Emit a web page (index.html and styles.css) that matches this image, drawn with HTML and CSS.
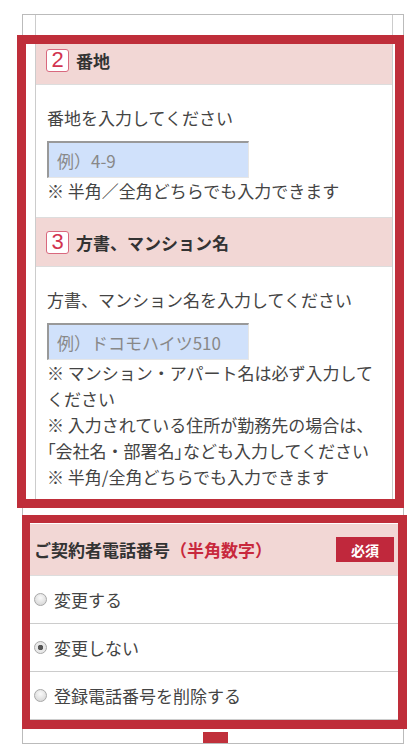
FILE: index.html
```html
<!DOCTYPE html>
<html lang="ja">

<head>
    <meta charset="UTF-8">
    <meta name="viewport" content="width=device-width, initial-scale=1.0">
    <title>ご契約者情報の変更</title>
    <link rel="stylesheet" href="styles.css">
</head>

<body>
    <div class="screen">
        <div class="address-column">
            <div class="step-head">
                <span class="step-num">2</span>
                <span class="step-title">番地</span>
            </div>
            <div class="step-body">
                <p class="step-label">番地を入力してください</p>
                <input type="text" class="step-input" placeholder="例）4-9">
                <p class="step-note">※ 半角／全角どちらでも入力できます</p>
            </div>

            <div class="step-head">
                <span class="step-num">3</span>
                <span class="step-title">方書、マンション名</span>
            </div>
            <div class="step-body">
                <p class="step-label">方書、マンション名を入力してください</p>
                <input type="text" class="step-input" placeholder="例）ドコモハイツ510">
                <p class="step-note">
                    ※ マンション・アパート名は必ず入力して<br>ください<br>
                    ※ 入力されている住所が勤務先の場合は、<br>
                    <span class="bracket">「</span>会社名・部署名<span class="bracket">」</span>なども入力してください<br>
                    ※ 半角/全角どちらでも入力できます
                </p>
            </div>
        </div>

        <div class="phone-section">
            <div class="phone-head">
                <span class="phone-title">ご契約者電話番号<span class="phone-hint">（半角数字）</span></span>
                <span class="required">必須</span>
            </div>
            <label class="phone-row"><input type="radio" name="tel"> 変更する</label>
            <label class="phone-row"><input type="radio" name="tel" checked> 変更しない</label>
            <label class="phone-row"><input type="radio" name="tel"> 登録電話番号を削除する</label>
        </div>

        <div class="next-button"></div>
    </div>

    <!-- 赤枠（注釈） -->
    <div class="frame frame-address"></div>
    <div class="frame frame-phone"></div>
</body>

</html>
```

FILE: styles.css
```css
html, body {
    margin: 0;
    padding: 0;
    background-color: white;
}

body {
    position: relative;
    font-family: "Noto Sans CJK JP", "Noto Sans", sans-serif;
    color: #444;
    font-size: 17px;
}

p {
    margin: 0;
}

.screen {
    margin: 14px 0 0 22px;
    width: 380px;
    height: 728px;
    border: 1px solid #bbb;
    overflow: hidden;
}

.address-column {
    margin: 0 10px 0 12px;
    padding-top: 20px;
    border-left: 1px solid #ccc;
    border-right: 1px solid #ccc;
}

.step-head {
    display: flex;
    align-items: center;
    gap: 7px;
    height: 48px;
    padding-left: 10px;
    background-color: #f2d7d5;
    border-top: 1px solid #ddd;
    border-bottom: 1px solid #ddd;
}

.step-num {
    display: flex;
    align-items: center;
    justify-content: center;
    width: 21px;
    height: 21px;
    border: 1px solid #d9687e;
    border-radius: 3px;
    background-color: white;
    color: #d2344f;
    font-family: "Liberation Sans", sans-serif;
    font-size: 22px;
    line-height: 1;
}

.step-title {
    font-weight: bold;
    font-size: 17px;
    color: #333;
}

.step-body {
    padding: 20px 12px 13px 11px;
    line-height: 26px;
}

.step-input {
    display: block;
    box-sizing: border-box;
    width: 202px;
    height: 37px;
    margin-top: 10px;
    padding: 0 0 0 8px;
    background-color: #d0e1fb;
    border-top: 2px solid #999;
    border-left: 2px solid #999;
    border-right: 1px solid #e6e6e6;
    border-bottom: 1px solid #e6e6e6;
    font-family: inherit;
    font-size: 17px;
    outline: none;
}

.step-input::placeholder {
    color: #888;
}

.step-note {
    white-space: nowrap;
}

.bracket {
    font-feature-settings: "palt";
}

/* 電話番号 */
.phone-section {
    margin-top: 21px;
}

.phone-head {
    display: flex;
    align-items: center;
    justify-content: space-between;
    height: 51px;
    padding: 0 9px 0 11px;
    background-color: #f2d7d5;
    border-bottom: 1px solid #ddd;
}

.phone-title {
    font-weight: bold;
    color: #333;
}

.phone-hint {
    color: #c8283c;
}

.required {
    display: flex;
    align-items: center;
    justify-content: center;
    width: 58px;
    height: 25px;
    background-color: #c0283c;
    color: white;
    font-weight: bold;
    font-size: 14px;
}

.phone-row {
    display: flex;
    align-items: center;
    gap: 7px;
    height: 47px;
    padding-left: 11px;
    border-bottom: 1px solid #ccc;
}

.phone-row input {
    appearance: none;
    -webkit-appearance: none;
    width: 13px;
    height: 13px;
    margin: 0;
    border: 1px solid #a8a8a8;
    border-radius: 50%;
    background: radial-gradient(circle at 50% 35%, #fafafa, #d0d0d0);
}

.phone-row input:checked {
    background: radial-gradient(circle, #555 0 2.5px, #e8e8e8 3px);
}

.next-button {
    width: 25px;
    height: 11px;
    margin: 12px 0 0 180px;
    background-color: #c0303b;
}

/* 赤枠 */
.frame {
    position: absolute;
    box-sizing: border-box;
    border-style: solid;
    border-color: #bf2e3a;
}

.frame-address {
    left: 17px;
    top: 35px;
    width: 387px;
    height: 473px;
    border-width: 9px;
}

.frame-phone {
    left: 22px;
    top: 515px;
    width: 385px;
    height: 214px;
    border-width: 8px 9px 9px 8px;
}
```
